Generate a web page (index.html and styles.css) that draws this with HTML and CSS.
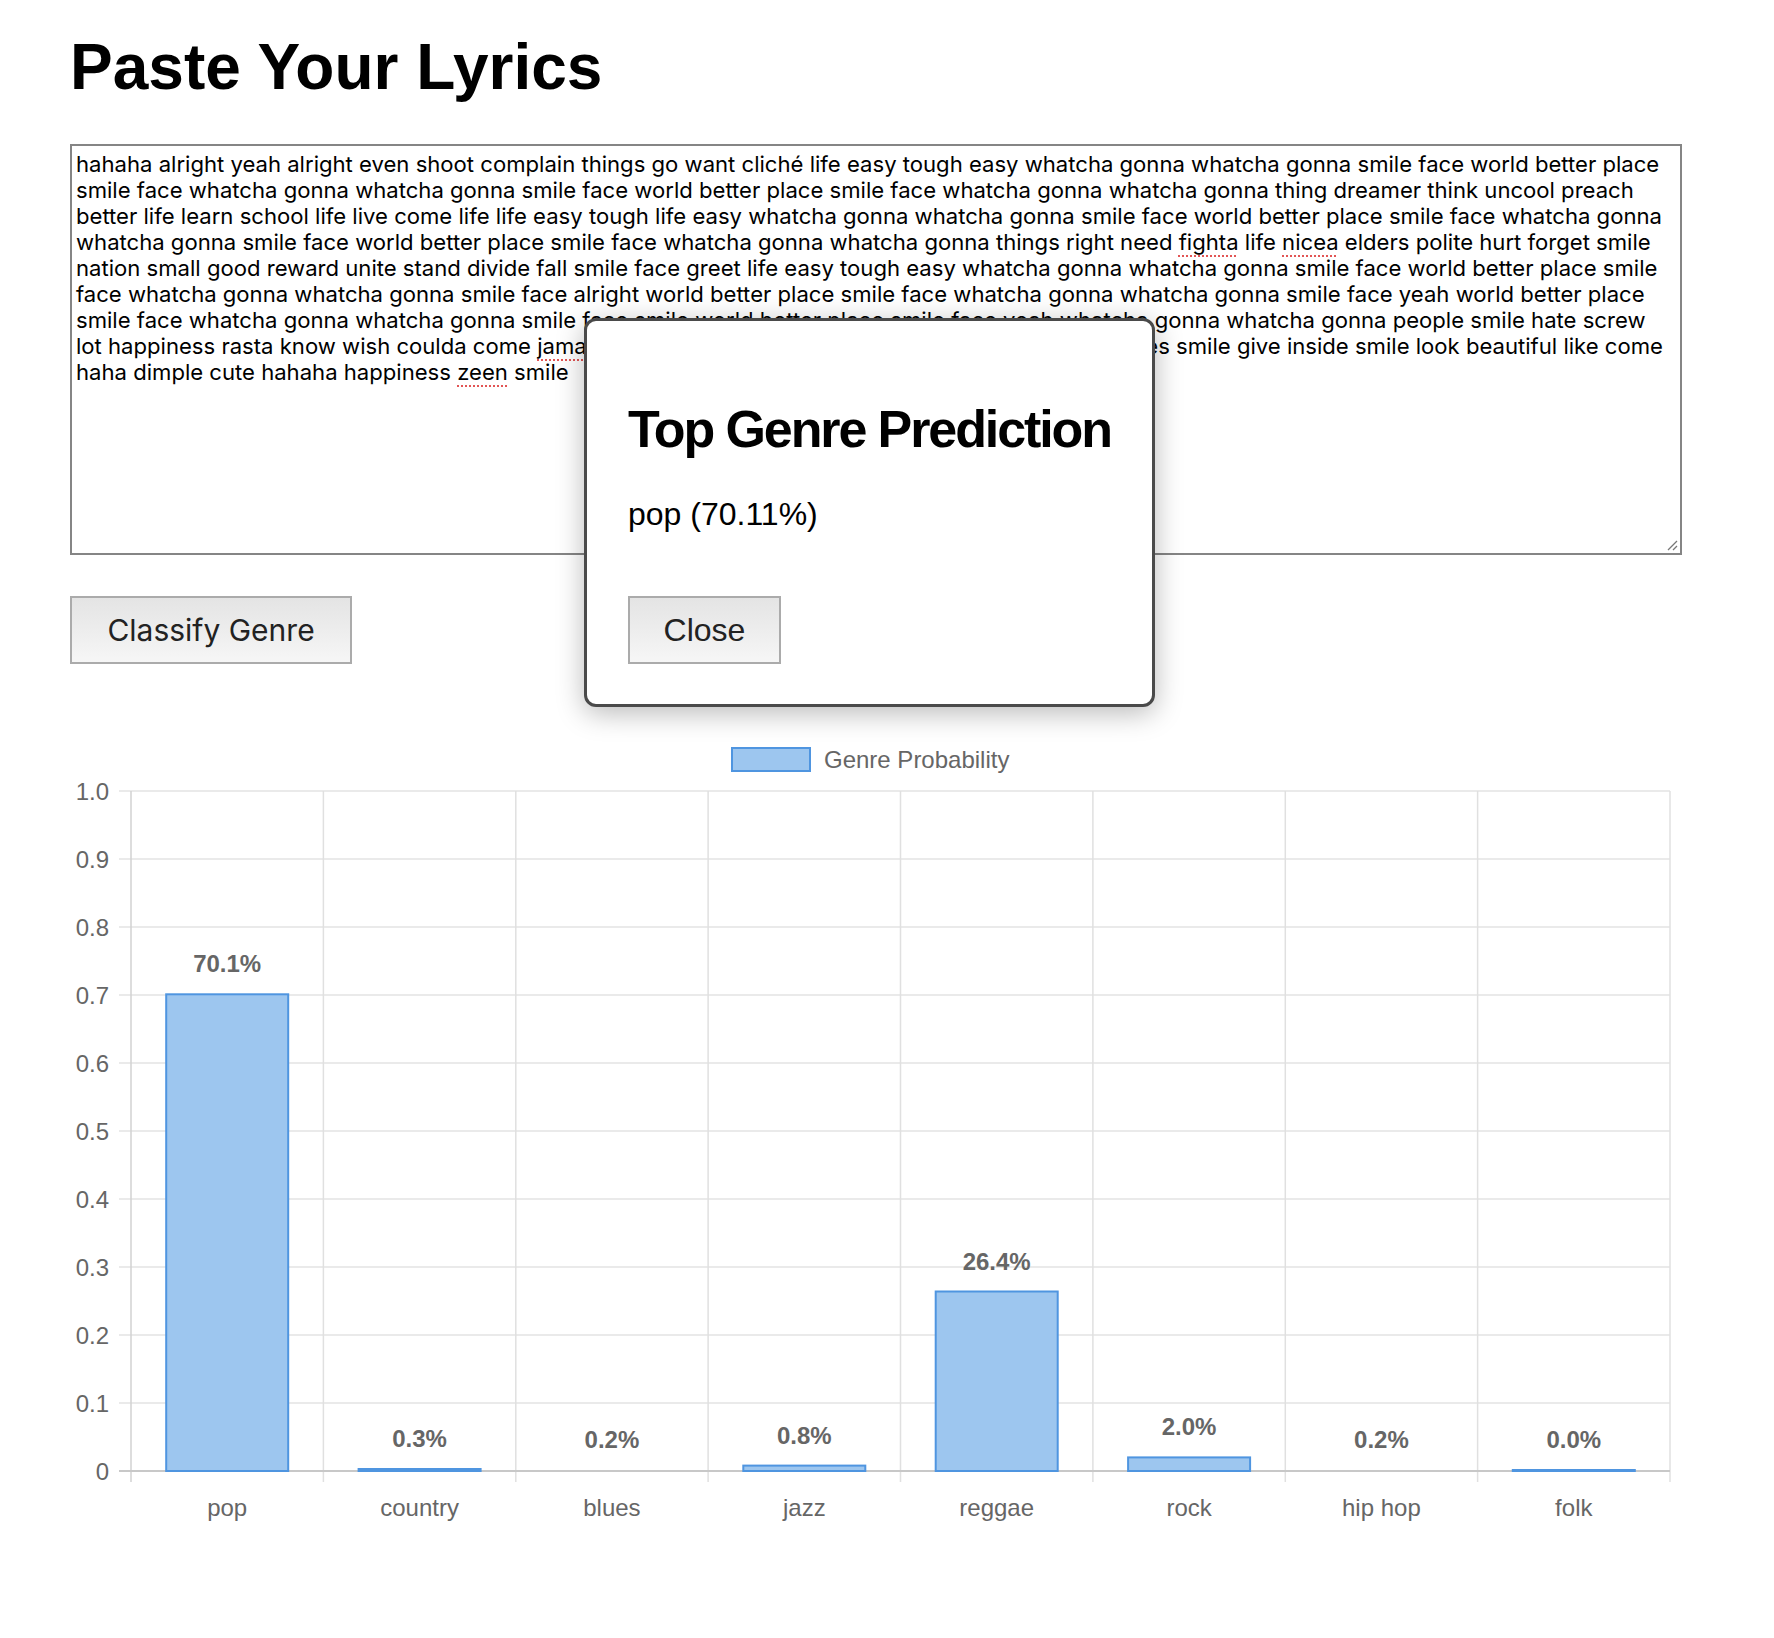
FILE: index.html
```html
<!DOCTYPE html>
<html lang="en">
<head>
<meta charset="utf-8">
<title>Lyrics Genre Classifier</title>
<link rel="stylesheet" href="styles.css">
</head>
<body>
<main class="page">
  <h1 class="title">Paste Your Lyrics</h1>

  <div class="lyrics" role="textbox" aria-multiline="true">hahaha alright yeah alright even shoot complain things go want cliché life easy tough easy whatcha gonna whatcha gonna smile face world better place<br>smile face whatcha gonna whatcha gonna smile face world better place smile face whatcha gonna whatcha gonna thing dreamer think uncool preach<br>better life learn school life live come life life easy tough life easy whatcha gonna whatcha gonna smile face world better place smile face whatcha gonna<br>whatcha gonna smile face world better place smile face whatcha gonna whatcha gonna things right need <span class="typo">fighta</span> life <span class="typo">nicea</span> elders polite hurt forget smile<br>nation small good reward unite stand divide fall smile face greet life easy tough easy whatcha gonna whatcha gonna smile face world better place smile<br>face whatcha gonna whatcha gonna smile face alright world better place smile face whatcha gonna whatcha gonna smile face yeah world better place<br>smile face whatcha gonna whatcha gonna smile face smile world better place smile face yeah whatcha gonna whatcha gonna people smile hate screw<br>lot happiness rasta know wish coulda come <span class="typo">jamaica</span> sunny smile face world better place smile face times smile give inside smile look beautiful like come<br>haha dimple cute hahaha happiness <span class="typo">zeen</span> smile<svg class="grip" width="12" height="12" viewBox="0 0 12 12" aria-hidden="true"><path d="M11 2 L2 11 M11 7 L7 11" stroke="#777" stroke-width="1.3" fill="none"/></svg></div>

  <div class="actions">
    <button class="btn btn-classify" type="button">Classify Genre</button>
  </div>

  <figure class="chart">
    <svg width="1612" height="820" viewBox="0 0 1612 820" font-family="Liberation Sans, Arial, sans-serif" font-size="24">
      <!-- legend -->
      <rect x="662" y="28" width="78" height="23" fill="#9dc6ef" stroke="#4f95e0" stroke-width="2"/>
      <text x="754" y="47.5" fill="#666">Genre Probability</text>

      <!-- horizontal grid -->
      <g stroke="#e3e3e3" stroke-width="1.5">
        <line x1="49" y1="71" x2="1600" y2="71"/>
        <line x1="49" y1="139" x2="1600" y2="139"/>
        <line x1="49" y1="207" x2="1600" y2="207"/>
        <line x1="49" y1="275" x2="1600" y2="275"/>
        <line x1="49" y1="343" x2="1600" y2="343"/>
        <line x1="49" y1="411" x2="1600" y2="411"/>
        <line x1="49" y1="479" x2="1600" y2="479"/>
        <line x1="49" y1="547" x2="1600" y2="547"/>
        <line x1="49" y1="615" x2="1600" y2="615"/>
        <line x1="49" y1="683" x2="1600" y2="683"/>
      </g>
      <!-- vertical grid -->
      <g stroke="#e0e0e0" stroke-width="1.5">
        <line x1="253.4" y1="71" x2="253.4" y2="762"/>
        <line x1="445.8" y1="71" x2="445.8" y2="762"/>
        <line x1="638.1" y1="71" x2="638.1" y2="762"/>
        <line x1="830.5" y1="71" x2="830.5" y2="762"/>
        <line x1="1022.9" y1="71" x2="1022.9" y2="762"/>
        <line x1="1215.3" y1="71" x2="1215.3" y2="762"/>
        <line x1="1407.6" y1="71" x2="1407.6" y2="762"/>
        <line x1="1600" y1="71" x2="1600" y2="762"/>
      </g>
      <!-- axes -->
      <line x1="61" y1="71" x2="61" y2="762" stroke="#d2d2d2" stroke-width="1.5"/>
      <line x1="49" y1="751" x2="1600" y2="751" stroke="#c8c8c8" stroke-width="2"/>

      <!-- y labels -->
      <g fill="#666" text-anchor="end">
        <text x="39" y="79.5">1.0</text>
        <text x="39" y="147.5">0.9</text>
        <text x="39" y="215.5">0.8</text>
        <text x="39" y="283.5">0.7</text>
        <text x="39" y="351.5">0.6</text>
        <text x="39" y="419.5">0.5</text>
        <text x="39" y="487.5">0.4</text>
        <text x="39" y="555.5">0.3</text>
        <text x="39" y="623.5">0.2</text>
        <text x="39" y="691.5">0.1</text>
        <text x="39" y="759.5">0</text>
      </g>

      <!-- bars -->
      <g fill="#9dc6ef" stroke="#4f95e0" stroke-width="2">
        <rect x="96.2" y="274.3" width="122" height="476.7"/>
        <rect x="288.6" y="749" width="122" height="2"/>
        <rect x="673.3" y="745.6" width="122" height="5.4"/>
        <rect x="865.7" y="571.5" width="122" height="179.5"/>
        <rect x="1058.1" y="737.4" width="122" height="13.6"/>
        <rect x="1442.8" y="750" width="122" height="1"/>
      </g>

      <!-- data labels -->
      <g fill="#666" font-weight="700" text-anchor="middle">
        <text x="157.2" y="252.3">70.1%</text>
        <text x="349.6" y="727">0.3%</text>
        <text x="541.9" y="727.6">0.2%</text>
        <text x="734.3" y="723.6">0.8%</text>
        <text x="926.7" y="549.5">26.4%</text>
        <text x="1119.1" y="715.4">2.0%</text>
        <text x="1311.4" y="727.6">0.2%</text>
        <text x="1503.8" y="728">0.0%</text>
      </g>

      <!-- x labels -->
      <g fill="#666" text-anchor="middle">
        <text x="157.2" y="796">pop</text>
        <text x="349.6" y="796">country</text>
        <text x="541.9" y="796">blues</text>
        <text x="734.3" y="796">jazz</text>
        <text x="926.7" y="796">reggae</text>
        <text x="1119.1" y="796">rock</text>
        <text x="1311.4" y="796">hip hop</text>
        <text x="1503.8" y="796">folk</text>
      </g>
    </svg>
  </figure>

  <div class="modal" role="dialog" aria-labelledby="modal-title">
    <h2 class="modal-title" id="modal-title">Top Genre Prediction</h2>
    <p class="modal-result">pop (70.11%)</p>
    <button class="btn btn-close" type="button">Close</button>
  </div>
</main>
</body>
</html>
```

FILE: styles.css
```css
html, body {
  margin: 0;
  padding: 0;
  background: #ffffff;
}

body {
  font-family: "Liberation Sans", Arial, Helvetica, sans-serif;
  color: #000;
}

.page {
  position: relative;
  padding: 31px 92px 0 70px;
  min-height: 1607px;
}

.title {
  margin: 0;
  font-size: 64px;
  line-height: 72px;
  font-weight: 700;
}

.lyrics {
  position: relative;
  margin-top: 41px;
  height: 411px;
  box-sizing: border-box;
  border: 2px solid #858585;
  padding: 5px 5px 0 4px;
  font-family: Inter, "Noto Sans", sans-serif;
  font-size: 22.1px;
  line-height: 26px;
  white-space: nowrap;
  overflow: hidden;
  color: #000;
}

.typo {
  text-decoration: underline dotted #e25555;
  text-decoration-thickness: 2px;
  text-underline-offset: 5px;
}

.grip {
  position: absolute;
  right: 2px;
  bottom: 2px;
}

.actions {
  margin-top: 41px;
  display: flex;
}

.btn {
  height: 68px;
  box-sizing: border-box;
  border: 2px solid #ababab;
  border-radius: 0;
  background: linear-gradient(#e4e4e4, #f6f6f6);
  color: #222;
  padding: 0;
  cursor: pointer;
}

.btn-classify {
  width: 282px;
  font-family: Inter, "Noto Sans", sans-serif;
  font-size: 30px;
}

.chart {
  margin: 56px 0 0;
  display: block;
}

.chart svg {
  display: block;
}

.modal {
  position: absolute;
  left: 584px;
  top: 318px;
  width: 571px;
  height: 389px;
  box-sizing: border-box;
  padding: 0 24px 0 41px;
  border: 3px solid #4a4a4a;
  border-radius: 12px;
  background: #fff;
  box-shadow: 0 6px 28px rgba(0, 0, 0, 0.28);
}

.modal-title {
  margin: 78px 0 0;
  font-size: 52px;
  line-height: 60px;
  font-weight: 700;
  letter-spacing: -2.1px;
  white-space: nowrap;
}

.modal-result {
  margin: 37px 0 0;
  font-size: 32px;
  line-height: 36px;
}

.btn-close {
  margin-top: 64px;
  width: 153px;
  font-family: "Liberation Sans", Arial, sans-serif;
  font-size: 32px;
}
```
